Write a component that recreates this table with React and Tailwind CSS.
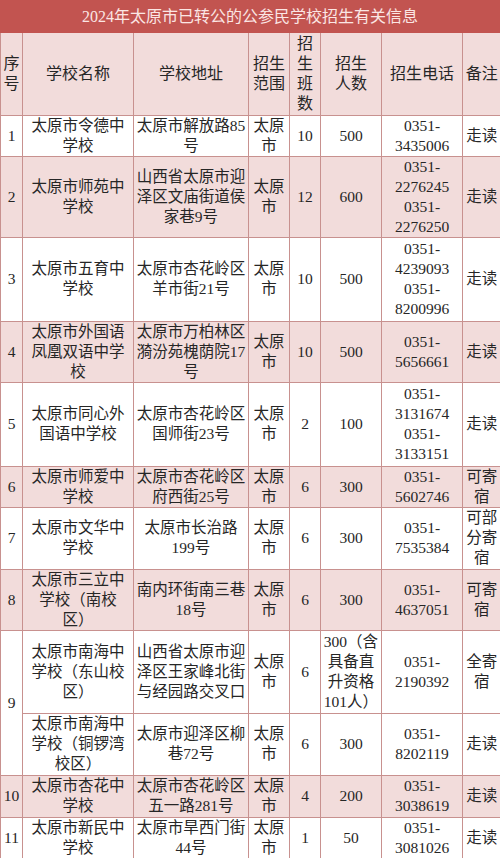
import React from "react";

const rows = [
  { no: "1", name: ["太原市令德中", "学校"], addr: ["太原市解放路85", "号"], cls: "10", num: ["500"], tel: ["0351-", "3435006"], note: ["走读"], pink: false, h: "h-[41px]" },
  { no: "2", name: ["太原市师苑中", "学校"], addr: ["山西省太原市迎", "泽区文庙街道侯", "家巷9号"], cls: "12", num: ["600"], tel: ["0351-", "2276245", "0351-", "2276250"], note: ["走读"], pink: true, h: "h-[81px]" },
  { no: "3", name: ["太原市五育中", "学校"], addr: ["太原市杏花岭区", "羊市街21号"], cls: "10", num: ["500"], tel: ["0351-", "4239093", "0351-", "8200996"], note: ["走读"], pink: false, h: "h-[84px]" },
  { no: "4", name: ["太原市外国语", "凤凰双语中学", "校"], addr: ["太原市万柏林区", "漪汾苑槐荫院17", "号"], cls: "10", num: ["500"], tel: ["0351-", "5656661"], note: ["走读"], pink: true, h: "h-[61px]" },
  { no: "5", name: ["太原市同心外", "国语中学校"], addr: ["太原市杏花岭区", "国师街23号"], cls: "2", num: ["100"], tel: ["0351-", "3131674", "0351-", "3133151"], note: ["走读"], pink: false, h: "h-[84px]" },
  { no: "6", name: ["太原市师爱中", "学校"], addr: ["太原市杏花岭区", "府西街25号"], cls: "6", num: ["300"], tel: ["0351-", "5602746"], note: ["可寄", "宿"], pink: true, h: "h-[40px]" },
  { no: "7", name: ["太原市文华中", "学校"], addr: ["太原市长治路", "199号"], cls: "6", num: ["300"], tel: ["0351-", "7535384"], note: ["可部", "分寄", "宿"], pink: false, h: "h-[62px]" },
  { no: "8", name: ["太原市三立中", "学校（南校", "区）"], addr: ["南内环街南三巷", "18号"], cls: "6", num: ["300"], tel: ["0351-", "4637051"], note: ["可寄", "宿"], pink: true, h: "h-[61px]" },
  { no: "9", span: 2, name: ["太原市南海中", "学校（东山校", "区）"], addr: ["山西省太原市迎", "泽区王家峰北街", "与经园路交叉口"], cls: "6", num: ["300（含", "具备直", "升资格", "101人）"], tel: ["0351-", "2190392"], note: ["全寄", "宿"], pink: false, h: "h-[83px]" },
  { skipNo: true, name: ["太原市南海中", "学校（铜锣湾", "校区）"], addr: ["太原市迎泽区柳", "巷72号"], cls: "6", num: ["300"], tel: ["0351-", "8202119"], note: ["走读"], pink: false, h: "h-[62px]" },
  { no: "10", name: ["太原市杏花中", "学校"], addr: ["太原市杏花岭区", "五一路281号"], cls: "4", num: ["200"], tel: ["0351-", "3038619"], note: ["走读"], pink: true, h: "h-[42px]" },
  { no: "11", name: ["太原市新民中", "学校"], addr: ["太原市旱西门街", "44号"], cls: "1", num: ["50"], tel: ["0351-", "3081026"], note: ["走读"], pink: false, h: "h-[41px]" },
];

const Lines = ({ items }) =>
  items.map((t, i) => (
    <span key={i} className="block whitespace-nowrap">
      {t}
    </span>
  ));

const cell = "border border-[#c8918f] p-0 text-center align-middle";

export default function App() {
  return (
    <div className="w-[500px] h-[858px] overflow-hidden bg-white font-['Liberation_Serif','Noto_Sans_CJK_SC',serif] text-[15.5px] leading-[20px] text-[#262626]">
      <div className="h-[33px] bg-[#c25450] flex items-center justify-center text-[16px] text-[#fbe6e4]">
        2024年太原市已转公的公参民学校招生有关信息
      </div>
      <table className="w-[500px] table-fixed border-collapse">
        <colgroup>
          <col className="w-[22px]" />
          <col className="w-[111px]" />
          <col className="w-[115px]" />
          <col className="w-[41px]" />
          <col className="w-[31px]" />
          <col className="w-[61px]" />
          <col className="w-[81px]" />
          <col className="w-[38px]" />
        </colgroup>
        <thead>
          <tr className="bg-[#f2dcdb] text-[16px]">
            <th className={`${cell} h-[82px] font-normal border-t-0`}><Lines items={["序", "号"]} /></th>
            <th className={`${cell} font-normal border-t-0`}>学校名称</th>
            <th className={`${cell} font-normal border-t-0`}>学校地址</th>
            <th className={`${cell} font-normal border-t-0`}><Lines items={["招生", "范围"]} /></th>
            <th className={`${cell} font-normal border-t-0`}><Lines items={["招", "生", "班", "数"]} /></th>
            <th className={`${cell} font-normal border-t-0`}><Lines items={["招生", "人数"]} /></th>
            <th className={`${cell} font-normal border-t-0`}>招生电话</th>
            <th className={`${cell} font-normal border-t-0 border-r-0`}>备注</th>
          </tr>
        </thead>
        <tbody>
          {rows.map((r, i) => (
            <tr key={i} className={r.pink ? "bg-[#f2dcdb]" : "bg-white"}>
              {!r.skipNo && (
                <td className={`${cell} bg-inherit`} rowSpan={r.span || 1}>
                  {r.no}
                </td>
              )}
              <td className={`${cell} ${r.h}`}><Lines items={r.name} /></td>
              <td className={cell}><Lines items={r.addr} /></td>
              <td className={cell}><Lines items={["太原", "市"]} /></td>
              <td className={cell}>{r.cls}</td>
              <td className={cell}><Lines items={r.num} /></td>
              <td className={cell}><Lines items={r.tel} /></td>
              <td className={`${cell} border-r-0`}><Lines items={r.note} /></td>
            </tr>
          ))}
        </tbody>
      </table>
    </div>
  );
}
